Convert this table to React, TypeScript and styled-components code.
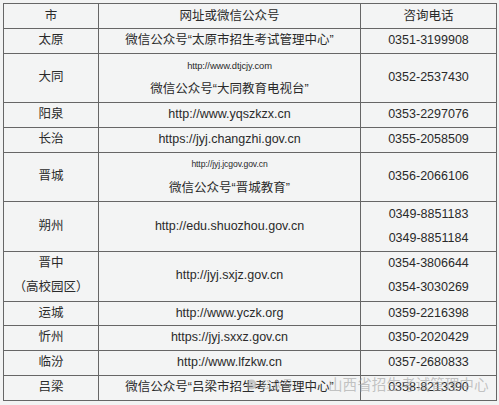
import React from "react";
import styled, { createGlobalStyle } from "styled-components";

const Global = createGlobalStyle`
  html, body {
    margin: 0;
    padding: 0;
    background: #f2f3f3;
  }
  body {
    padding: 3px 3px 0 3px;
    font-family: "Liberation Sans", "Noto Sans CJK SC", sans-serif;
    color: #2a2a2a;
  }
`;

const Wrap = styled.div`
  position: relative;
  width: 493px;
`;

const Table = styled.table`
  width: 493px;
  border-collapse: collapse;
  table-layout: fixed;
  border: 1px solid #8a8a8a;
  background: #f3f4f4;
`;

const Col = styled.col<{ $w: number }>`
  width: ${(p) => p.$w}px;
`;

const Row = styled.tr<{ $lines: number }>`
  height: ${(p) => (p.$lines * 24.8).toFixed(1)}px;
`;

const Cell = styled.td`
  border: 1px solid #666;
  padding: 0;
  text-align: center;
  vertical-align: middle;
  font-size: 12.5px;
  line-height: 22px;
  white-space: nowrap;
`;

const HeadCell = styled(Cell).attrs({ as: "th" })`
  font-weight: normal;
`;

const Stack = styled.div`
  display: flex;
  flex-direction: column;
  align-items: center;
`;

const Line = styled.div<{ $small?: boolean; $tiny?: boolean }>`
  height: 23.8px;
  line-height: 23.8px;
  font-size: ${(p) => (p.$tiny ? "8.6px" : p.$small ? "9.4px" : "12.5px")};
  letter-spacing: ${(p) => (p.$small || p.$tiny ? "-0.1px" : "0")};
`;

const Watermark = styled.div`
  position: absolute;
  left: 243px;
  top: 372px;
  display: flex;
  align-items: center;
  font-family: "Noto Sans CJK SC", sans-serif;
  line-height: 18px;
  color: rgba(160, 160, 160, 0.6);
  pointer-events: none;
  white-space: nowrap;
`;

const MarkSmall = styled.span`
  margin-left: 3px;
  font-size: 11px;
`;

const Dot = styled.span`
  width: 35px;
  text-align: center;
  font-size: 12px;
`;

const MarkMain = styled.span`
  font-size: 14.6px;
`;

type L = { t: string; small?: boolean; tiny?: boolean };
type R = { city: string[]; addr: L[]; phones: string[] };

const rows: R[] = [
  { city: ["太原"], addr: [{ t: "微信公众号“太原市招生考试管理中心”" }], phones: ["0351-3199908"] },
  {
    city: ["大同"],
    addr: [{ t: "http://www.dtjcjy.com", small: true }, { t: "微信公众号“大同教育电视台”" }],
    phones: ["0352-2537430"],
  },
  { city: ["阳泉"], addr: [{ t: "http://www.yqszkzx.cn" }], phones: ["0353-2297076"] },
  { city: ["长治"], addr: [{ t: "https://jyj.changzhi.gov.cn" }], phones: ["0355-2058509"] },
  {
    city: ["晋城"],
    addr: [{ t: "http://jyj.jcgov.gov.cn", tiny: true }, { t: "微信公众号“晋城教育”" }],
    phones: ["0356-2066106"],
  },
  { city: ["朔州"], addr: [{ t: "http://edu.shuozhou.gov.cn" }], phones: ["0349-8851183", "0349-8851184"] },
  {
    city: ["晋中", "（高校园区）"],
    addr: [{ t: "http://jyj.sxjz.gov.cn" }],
    phones: ["0354-3806644", "0354-3030269"],
  },
  { city: ["运城"], addr: [{ t: "http://www.yczk.org" }], phones: ["0359-2216398"] },
  { city: ["忻州"], addr: [{ t: "https://jyj.sxxz.gov.cn" }], phones: ["0350-2020429"] },
  { city: ["临汾"], addr: [{ t: "http://www.lfzkw.cn" }], phones: ["0357-2680833"] },
  { city: ["吕梁"], addr: [{ t: "微信公众号“吕梁市招生考试管理中心”" }], phones: ["0358-8213390"] },
];

export default function App() {
  return (
    <>
      <Global />
      <Wrap>
        <Table>
          <colgroup>
            <Col $w={95} />
            <Col $w={262} />
            <Col $w={136} />
          </colgroup>
          <thead>
            <Row $lines={1}>
              <HeadCell>市</HeadCell>
              <HeadCell>网址或微信公众号</HeadCell>
              <HeadCell>咨询电话</HeadCell>
            </Row>
          </thead>
          <tbody>
            {rows.map((r) => {
              const lines = Math.max(r.city.length, r.addr.length, r.phones.length);
              return (
                <Row key={r.city[0]} $lines={lines}>
                  <Cell>
                    <Stack>
                      {r.city.map((c) => (
                        <Line key={c}>{c}</Line>
                      ))}
                    </Stack>
                  </Cell>
                  <Cell>
                    <Stack>
                      {r.addr.map((a) => (
                        <Line key={a.t} $small={a.small} $tiny={a.tiny}>
                          {a.t}
                        </Line>
                      ))}
                    </Stack>
                  </Cell>
                  <Cell>
                    <Stack>
                      {r.phones.map((p) => (
                        <Line key={p}>{p}</Line>
                      ))}
                    </Stack>
                  </Cell>
                </Row>
              );
            })}
          </tbody>
        </Table>
        <Watermark>
          <svg width="11" height="11" viewBox="0 0 14 14">
            <circle cx="7" cy="7" r="6.5" fill="rgba(160,160,160,0.55)" />
            <circle cx="5" cy="6" r="1" fill="#f3f4f4" />
            <circle cx="9" cy="6" r="1" fill="#f3f4f4" />
          </svg>
          <MarkSmall>公众号</MarkSmall>
          <Dot>·</Dot>
          <MarkMain>山西省招生考试管理中心</MarkMain>
        </Watermark>
      </Wrap>
    </>
  );
}
